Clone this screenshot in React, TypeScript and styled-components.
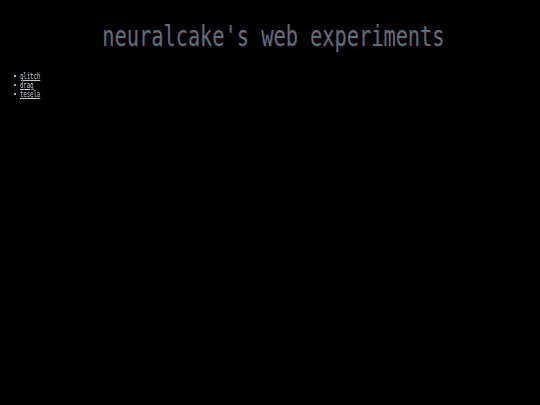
import React from 'react';
import styled, { createGlobalStyle } from 'styled-components';

const GlobalStyle = createGlobalStyle`
  html, body {
    margin: 0;
    padding: 0;
    background: #000;
  }
`;

const links = ['glitch', 'drag', 'tesela'];

function App() {
  return (
    <Page>
      <GlobalStyle />
      <Header>
        <Title>neuralcake's web experiments</Title>
      </Header>
      <ExperimentList>
        {links.map(name => (
          <Item key={name}>
            <ExperimentLink href={`#${name}`}>{name}</ExperimentLink>
          </Item>
        ))}
      </ExperimentList>
    </Page>
  );
}

const Page = styled.div`
  width: 540px;
  height: 405px;
  background: #000;
  overflow: hidden;
  font-family: 'DejaVu Sans Mono', monospace;
`;

const Header = styled.header`
  display: flex;
  justify-content: center;
  padding-top: 18px;
  padding-left: 7px;
  height: 46px;
`;

const Title = styled.h1`
  margin: 0;
  font-size: 29px;
  font-weight: normal;
  line-height: 36px;
  white-space: nowrap;
  color: #5d6f80;
  text-shadow: 1px 1px 0 rgba(90, 10, 20, 0.5);
  transform: scaleX(0.7);
`;

const ExperimentList = styled.ul`
  margin: 8px 0 0 0;
  padding: 0 0 0 20px;
  font-size: 8px;
  line-height: 9px;
  color: #bbb;
`;

const Item = styled.li`
  list-style: none;
  position: relative;

  &::before {
    content: '';
    position: absolute;
    left: -6px;
    top: 3px;
    width: 2px;
    height: 2px;
    background: #aaa;
  }
`;

const ExperimentLink = styled.a`
  display: inline-block;
  color: #c8c8c8;
  text-decoration: underline;
  transform: scaleX(0.7);
  transform-origin: left center;
`;

export default App;
